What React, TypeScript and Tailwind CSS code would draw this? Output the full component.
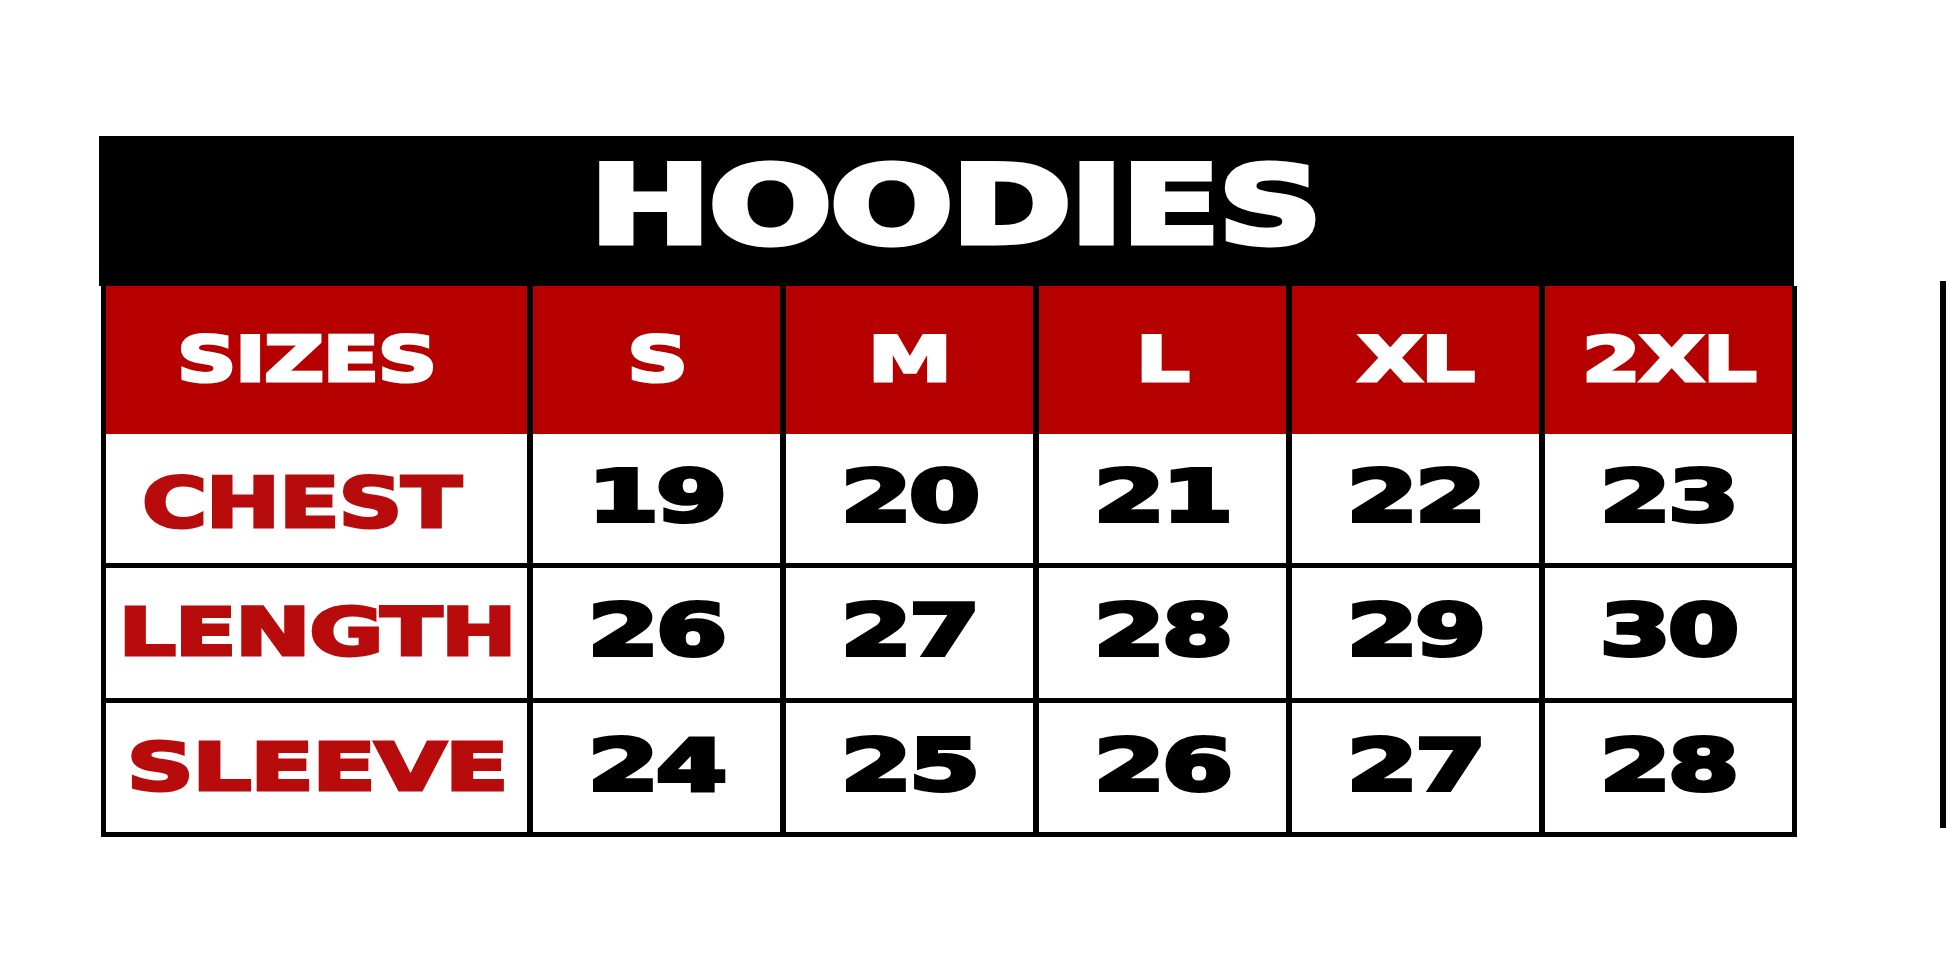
import React from "react";

const sizes = ["S", "M", "L", "XL", "2XL"];
const rows: { label: string; values: number[]; h: string; lab: string }[] = [
  { label: "CHEST", values: [19, 20, 21, 22, 23], h: "h-[129px]", lab: "text-[70px] scale-x-[1.27] pr-[24px] pt-[8px]" },
  { label: "LENGTH", values: [26, 27, 28, 29, 30], h: "h-[130px]", lab: "text-[66px] scale-x-[1.37]" },
  { label: "SLEEVE", values: [24, 25, 26, 27, 28], h: "h-[129px]", lab: "text-[66px] scale-x-[1.41]" },
];

function Wide({ className, children }: { className: string; children: React.ReactNode }) {
  return <span className={"inline-block leading-none font-bold whitespace-nowrap " + className}>{children}</span>;
}

function DataRow({ label, values, h, lab }: { label: string; values: number[]; h: string; lab: string }) {
  return (
    <div className={"grid grid-cols-[421px_repeat(5,247px)] gap-x-[6px] " + h}>
      <div className="bg-white flex items-center justify-center">
        <Wide className={"text-[#b80b0b] [-webkit-text-stroke:3px_#b80b0b] tracking-[-1px] " + lab}>{label}</Wide>
      </div>
      {values.map((v, i) => (
        <div key={i} className="bg-white flex items-center justify-center pb-[6px]">
          <Wide className="text-[72px] text-black scale-x-[1.42] tracking-[-2px] [-webkit-text-stroke:4px_black]">{v}</Wide>
        </div>
      ))}
    </div>
  );
}

export default function App() {
  return (
    <div
      className="w-[1946px] h-[973px] bg-white overflow-hidden flex"
      style={{ fontFamily: '"DejaVu Sans", "Liberation Sans", sans-serif' }}
    >
      <div className="ml-[99px] mt-[136px] w-[1698px] flex flex-col">
        <div className="h-[150px] w-[1695px] bg-black flex items-center justify-center pb-[10px] pl-[16px]">
          <Wide className="text-[108px] text-white scale-x-[1.35] tracking-[-2px] [-webkit-text-stroke:5px_white]">HOODIES</Wide>
        </div>
        <div className="ml-[2px] w-[1696px] bg-black px-[5px] pb-[5px] flex flex-col gap-[5px]">
          <div className="flex flex-col">
            <div className="grid grid-cols-[421px_repeat(5,247px)] gap-x-[6px] h-[148px]">
              <div className="bg-[#b60000] flex items-center justify-center pr-[20px]">
                <Wide className="text-[62px] text-white scale-x-[1.33] tracking-[-1px] [-webkit-text-stroke:3px_white]">SIZES</Wide>
              </div>
              {sizes.map((s) => (
                <div key={s} className="bg-[#b60000] flex items-center justify-center">
                  <Wide className="text-[62px] text-white scale-x-[1.36] tracking-[-1px] [-webkit-text-stroke:3px_white]">{s}</Wide>
                </div>
              ))}
            </div>
            <DataRow {...rows[0]} />
          </div>
          <DataRow {...rows[1]} />
          <DataRow {...rows[2]} />
        </div>
      </div>
      <div className="ml-[143px] mt-[281px] w-[6px] h-[547px] bg-black" />
    </div>
  );
}
